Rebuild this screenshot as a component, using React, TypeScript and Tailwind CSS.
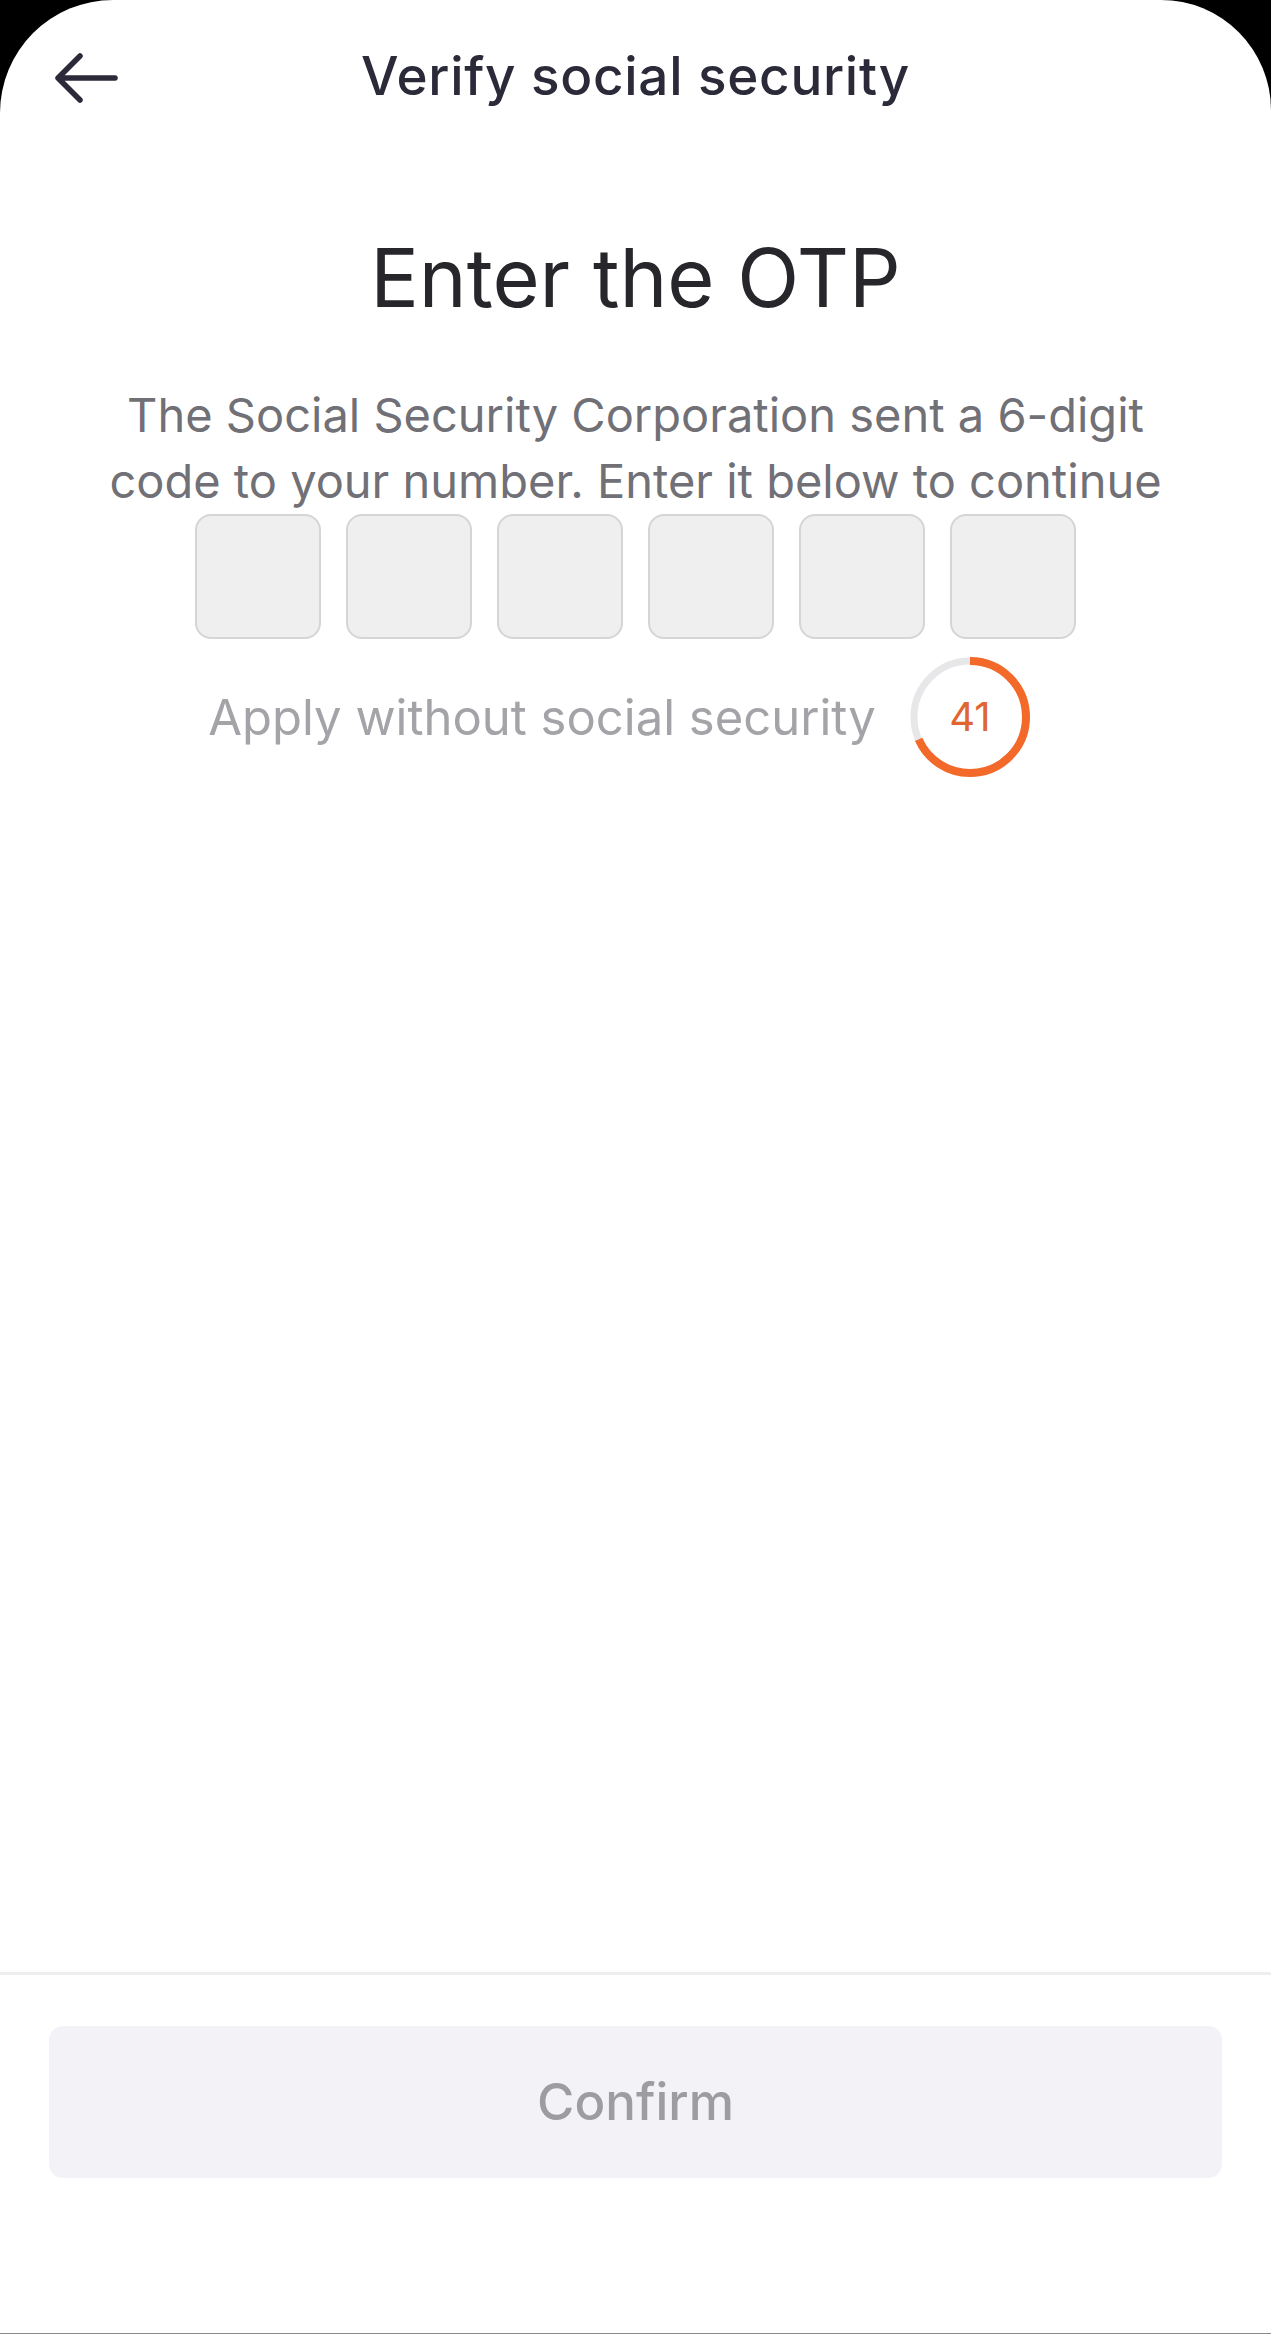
import React from "react";

const font = { fontFamily: '"Inter", "Noto Sans", "Liberation Sans", sans-serif' };

function BackArrow() {
  return (
    <svg width="66" height="50" viewBox="0 0 66 50" fill="none">
      <path d="M62 25H6M27 3L5 25L27 47" stroke="#2c2a3a" strokeWidth="5.5" strokeLinecap="round" strokeLinejoin="round" />
    </svg>
  );
}

function Timer() {
  const r = 56;
  const c = 2 * Math.PI * r;
  const orange = (c * 41) / 60;
  return (
    <div className="relative flex h-[122px] w-[122px] items-center justify-center">
      <svg width="122" height="122" viewBox="0 0 122 122" className="absolute inset-0">
        <circle cx="61" cy="61" r={r} stroke="#e7e7e9" strokeWidth="7" fill="none" />
        <circle
          cx="61"
          cy="61"
          r={r}
          stroke="#f2692a"
          strokeWidth="8"
          fill="none"
          strokeDasharray={`${orange} ${c}`}
          transform="rotate(-90 61 61)"
        />
      </svg>
      <span className="relative text-[40px] font-normal leading-none text-[#e0662f]" style={font}>41</span>
    </div>
  );
}

export default function App() {
  return (
    <div className="h-[2334px] w-[1271px] bg-black" style={font}>
      <div className="flex h-[2333px] w-full flex-col overflow-hidden rounded-tl-[113px] rounded-tr-[110px] bg-white">
        <div className="grid h-[154px] grid-cols-[1fr_auto_1fr] items-center">
          <div className="flex items-center pl-[53px] pt-[2px]">
            <BackArrow />
          </div>
          <div className="text-[53px] font-medium tracking-[0.7px] text-[#2b2a39]">Verify social security</div>
          <div />
        </div>

        <div className="flex flex-col items-center">
          <h1 className="mt-[74px] text-[81px] font-normal leading-[100px] text-[#27272b]">Enter the OTP</h1>
          <p className="mt-[54px] text-center text-[47px] leading-[66px] text-[#707076]">
            The Social Security Corporation sent a 6-digit
            <br />
            code to your number. Enter it below to continue
          </p>
          <div className="flex gap-[25px]">
            {[0, 1, 2, 3, 4, 5].map((i) => (
              <div key={i} className="h-[125px] w-[126px] rounded-[16px] border-2 border-[#d5d5d7] bg-[#efeff0]" />
            ))}
          </div>
          <div className="mt-[17px] flex items-center gap-[33px] pr-[32px]">
            <span className="text-[49px] leading-none text-[#a3a3a8]">Apply without social security</span>
            <Timer />
          </div>
        </div>

        <div className="flex-1" />

        <div className="h-[3px] w-full bg-[#eeeeef]" />
        <div className="px-[49px] pb-[155px] pt-[51px]">
          <div className="flex h-[152px] items-center justify-center rounded-[14px] bg-[#f3f3f7]">
            <span className="text-[51px] font-medium text-[#9c9ca1]">Confirm</span>
          </div>
        </div>
      </div>
      <div className="h-px w-full bg-[#8a8a8a]" />
    </div>
  );
}
